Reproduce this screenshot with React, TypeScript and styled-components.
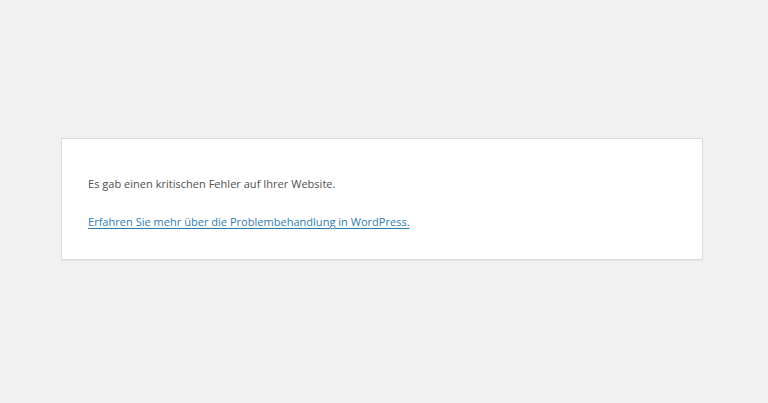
import React from 'react';
import styled, { createGlobalStyle } from 'styled-components';

const GlobalStyle = createGlobalStyle`
  html, body {
    margin: 0;
    padding: 0;
    background: #f1f1f1;
  }
`;

const Page = styled.div`
  min-height: 403px;
  display: flex;
  align-items: center;
  justify-content: flex-start;
  padding-left: 61px;
  box-sizing: border-box;
`;

const ErrorBox = styled.div`
  width: 642px;
  box-sizing: border-box;
  background: #fff;
  border: 1px solid #dcdcde;
  box-shadow: 0 1px 1px rgba(0, 0, 0, 0.04);
  padding: 36px 26px 28px;
  font-family: "Open Sans", "Noto Sans", sans-serif;
  color: #505050;
  margin-top: -5px;
`;

const Message = styled.p`
  margin: 0;
  font-size: 11.05px;
  line-height: 18px;

  & + & {
    margin-top: 20px;
  }
`;

const Link = styled.a`
  color: #2f7bb2;
  text-decoration: underline;
  text-underline-offset: 2px;
`;

export default function App() {
  return (
    <>
      <GlobalStyle />
      <Page>
        <ErrorBox>
          <Message>Es gab einen kritischen Fehler auf Ihrer Website.</Message>
          <Message>
            <Link href="#">Erfahren Sie mehr über die Problembehandlung in WordPress.</Link>
          </Message>
        </ErrorBox>
      </Page>
    </>
  );
}
